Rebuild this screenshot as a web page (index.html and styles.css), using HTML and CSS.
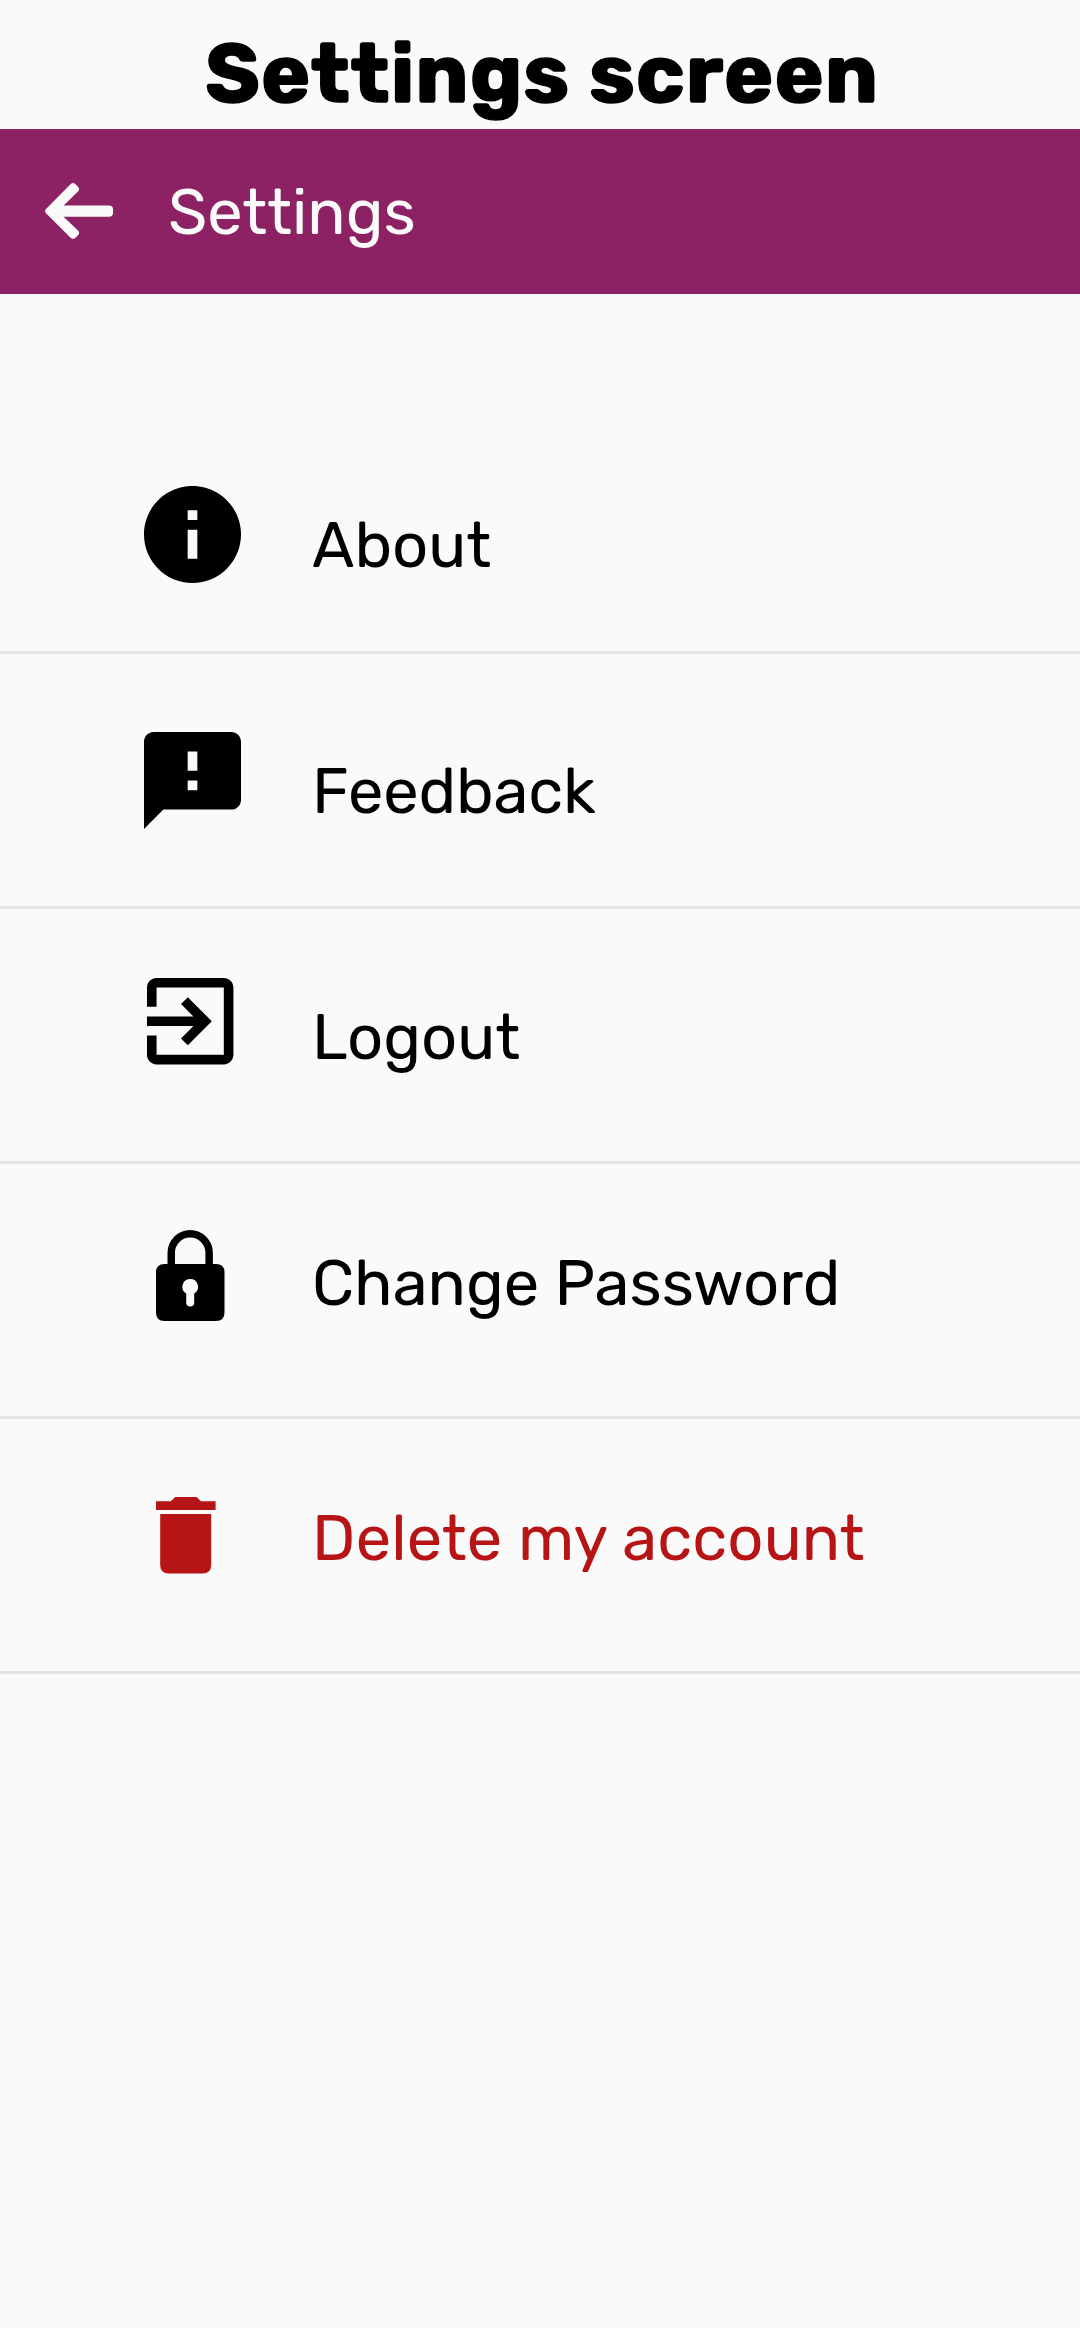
FILE: index.html
```html
<!DOCTYPE html>
<html lang="en">
<head>
<meta charset="utf-8">
<title>Settings</title>
<link rel="stylesheet" href="styles.css">
</head>
<body>
<h1 class="title">Settings screen</h1>
<header class="bar">
  <svg class="back" viewBox="0 0 68 56" width="68" height="56" aria-label="Back"><path d="M1 26 25.500 1.200Q28-1 30.500 1.200L33 3.700Q35.200 6 33 8.600L18.600 22.400H64Q68 22.400 68 26V30Q68 33.700 64 33.700H18.600L33 47.400Q35.200 50 33 52.300L30.500 54.800Q28 57 25.500 54.800L1 30.200Q-1 28 1 26Z"/></svg>
  <span class="bar-title">Settings</span>
</header>
<ul class="menu">
  <li class="item about">
    <svg class="icon" viewBox="2 2 20 20"><path d="M12 2C6.480 2 2 6.480 2 12s4.480 10 10 10 10-4.480 10-10S17.520 2 12 2zm1 15h-2v-6h2v6zm0-8h-2V7h2v2z"/></svg>
    <span class="label">About</span>
  </li>
  <li class="item feedback">
    <svg class="icon" viewBox="2 2 20 20"><path d="M20 2H4c-1.100 0-2 .9-2 2v18l4-4h14c1.100 0 2-.9 2-2V4c0-1.100-.9-2-2-2zm-7 12h-2v-2h2v2zm0-4h-2V6h2v4z"/></svg>
    <span class="label">Feedback</span>
  </li>
  <li class="item logout">
    <svg class="icon" viewBox="2.380 3 20.200 20.200"><path d="M10.090 15.590 11.500 17l5-5-5-5-1.410 1.410L12.670 11H3v2h9.670l-2.580 2.590zM19 3H5c-1.110 0-2 .9-2 2v4h2V5h14v14H5v-4H3v4c0 1.100.89 2 2 2h14c1.100 0 2-.9 2-2V5c0-1.100-.9-2-2-2z"/></svg>
    <span class="label">Logout</span>
  </li>
  <li class="item password">
    <svg class="icon" viewBox="0 0 97 97"><path fill-rule="evenodd" d="M23.500 34V22.700a22.700 22.700 0 0 1 45.400 0V34H72q8.500 0 8.500 8.500V82.500q0 8.500-8.500 8.500H20.500q-8.500 0-8.500-8.500V42.500Q12 34 20.500 34ZM31 34H61.400V22.700a15.200 15.200 0 0 0-30.400 0ZM46.200 49a7.800 7.800 0 0 0-4 14.500V72.500a4 4 0 0 0 8 0V63.500A7.800 7.800 0 0 0 46.200 49Z"/></svg>
    <span class="label">Change Password</span>
  </li>
  <li class="item delete">
    <svg class="icon" viewBox="0 0 97 97"><path d="M31.200 -1H52.600L57 3.200H71.600V12H12V3.200H26.800ZM16.200 16H67.200V67Q67.200 75.600 58.600 75.600H24.800Q16.200 75.600 16.200 67Z"/></svg>
    <span class="label">Delete my account</span>
  </li>
</ul>
</body>
</html>
```
FILE: styles.css
```css
body {
  margin: 0;
  min-height: 2328px;
  background: #fafafa;
  color: #000;
  font-family: Rubik, Roboto, "Liberation Sans", sans-serif;
}

.title {
  box-sizing: border-box;
  height: 129px;
  margin: 0;
  padding: 25px 0 0 4px;
  font-size: 83px;
  font-weight: 700;
  line-height: 97px;
  letter-spacing: 1px;
  -webkit-text-stroke: 1.5px currentColor;
  text-align: center;
  white-space: nowrap;
}

.bar {
  display: flex;
  align-items: flex-start;
  box-sizing: border-box;
  height: 165px;
  padding: 46px 0 0 45px;
  background: #8c2163;
  color: #fafafa;
}

.back {
  margin-top: 8px;
  fill: currentColor;
}

.bar-title {
  margin: 1px 0 0 55px;
  font-size: 63.250px;
  line-height: 74px;
}

.menu {
  margin: 0;
  padding: 105px 0 0;
  list-style: none;
}

.item {
  display: flex;
  align-items: flex-start;
  gap: 71px;
  box-sizing: border-box;
  height: 255px;
  padding-left: 144px;
  border-bottom: 3px solid #e4e5e0;
}

.icon {
  overflow: visible;
  width: 97px;
  height: 97px;
  fill: currentColor;
}

.label {
  margin-top: 23px;
  font-size: 63.250px;
  line-height: 74px;
  white-space: nowrap;
}

.about { padding-top: 87px; }
.feedback { padding-top: 78px; }
.feedback .label { letter-spacing: -0.15px; }
.logout { padding-top: 69px; }
.password { padding-top: 66px; }
.password .label { margin-top: 17px; }
.delete { padding-top: 79px; color: #b71515; }
.delete .label { margin-top: 4px; letter-spacing: 0.1px; }
```
